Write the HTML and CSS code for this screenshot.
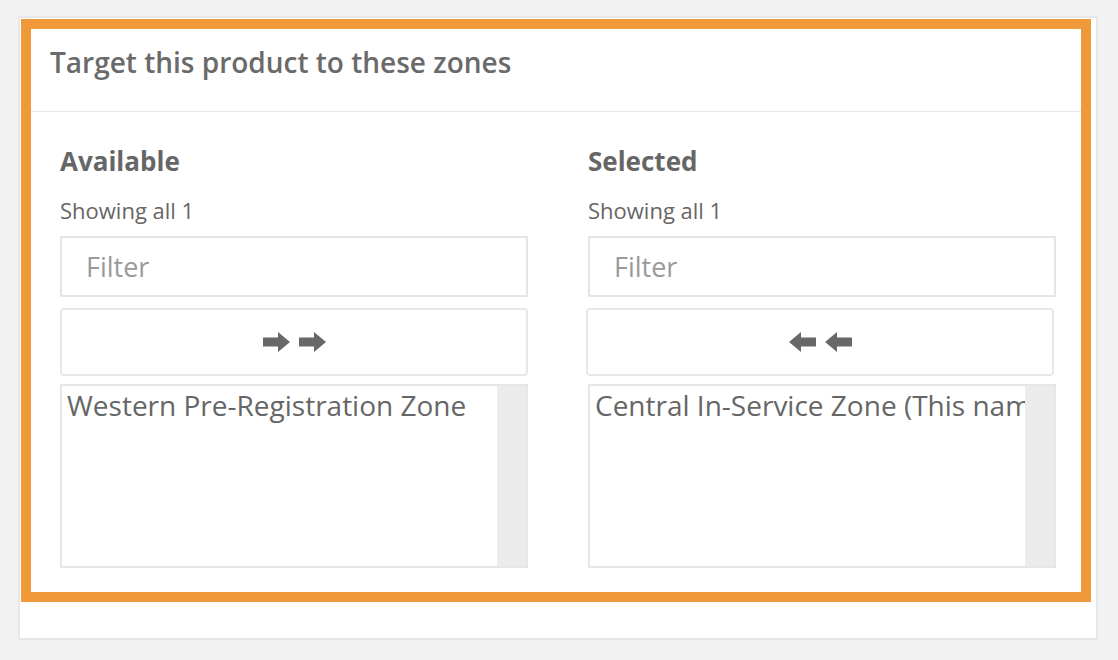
FILE: index.html
```html
<!DOCTYPE html>
<html lang="en">
<head>
<meta charset="utf-8">
<title>Target this product to these zones</title>
<link rel="stylesheet" href="styles.css">
</head>
<body>
<div class="card">
  <section class="panel">
    <header class="panel-head">
      <h2 class="panel-title">Target this product to these zones</h2>
    </header>
    <div class="panel-body">
      <div class="col col-left">
        <h3 class="col-label">Available</h3>
        <div class="info">Showing all 1</div>
        <input class="filter" type="text" placeholder="Filter">
        <button class="move-btn" type="button" aria-label="Move all">
          <svg class="arrow" width="27" height="20" viewBox="0 0 27 20"><path d="M0 5.5H15V0L27 10L15 20V14.5H0Z"/></svg>
          <svg class="arrow" width="27" height="20" viewBox="0 0 27 20"><path d="M0 5.5H15V0L27 10L15 20V14.5H0Z"/></svg>
        </button>
        <div class="listbox">
          <div class="list-items">
            <div class="option">Western Pre-Registration Zone</div>
          </div>
          <div class="track"></div>
        </div>
      </div>
      <div class="col col-right">
        <h3 class="col-label">Selected</h3>
        <div class="info">Showing all 1</div>
        <input class="filter" type="text" placeholder="Filter">
        <button class="move-btn move-btn-right" type="button" aria-label="Remove all">
          <svg class="arrow" width="27" height="20" viewBox="0 0 27 20"><path d="M27 5.5H12V0L0 10L12 20V14.5H27Z"/></svg>
          <svg class="arrow" width="27" height="20" viewBox="0 0 27 20"><path d="M27 5.5H12V0L0 10L12 20V14.5H27Z"/></svg>
        </button>
        <div class="listbox">
          <div class="list-items">
            <div class="option">Central In-Service Zone (This name is very long)</div>
          </div>
          <div class="track"></div>
        </div>
      </div>
    </div>
  </section>
</div>
</body>
</html>
```

FILE: styles.css
```css
* { box-sizing: border-box; }

html, body {
  background: #f2f2f2;
}

body {
  margin: 0;
  padding: 16px 20px 20px 18px;
  font-family: "Open Sans", "Noto Sans", "DejaVu Sans", sans-serif;
  color: #666;
}

.card {
  width: 1080px;
  background: #fff;
  border: 2px solid #e6e7e8;
  padding: 1px 5px 36px 1px;
}

.panel {
  border: 10px solid #f0993a;
  background: #fff;
}

.panel-head {
  padding: 14px 20px 30px 19px;
  border-bottom: 1px solid #e6e8e9;
}

.panel-title {
  margin: 0;
  font-size: 28px;
  line-height: 38px;
  font-weight: 600;
  color: #6a6a6a;
}

.panel-body {
  display: flex;
  gap: 60px;
  padding: 31px 25px 24px 29px;
}

.col {
  width: 468px;
  display: flex;
  flex-direction: column;
}

.col-label {
  margin: 0 0 16px 0;
  font-size: 26px;
  line-height: 36px;
  font-weight: 700;
  color: #666;
}

.info {
  font-size: 22px;
  line-height: 30px;
  color: #666;
  margin-bottom: 11px;
}

.filter {
  display: block;
  width: 100%;
  height: 61px;
  margin: 0 0 11px 0;
  padding: 0 24px;
  border: 2px solid #e5e5e5;
  border-radius: 0;
  background: #fff;
  font-family: "Open Sans", "Noto Sans", sans-serif;
  font-size: 27px;
  color: #666;
  outline: none;
}

.filter::placeholder {
  color: #9a9a9a;
}

.move-btn {
  display: flex;
  align-items: center;
  justify-content: center;
  gap: 9px;
  width: 100%;
  height: 68px;
  margin: 0 0 8px 0;
  padding: 0;
  border: 2px solid #e8e8e8;
  border-radius: 4px;
  background: #fff;
  cursor: pointer;
}

.move-btn-right {
  margin-left: -2px;
}

.arrow {
  display: block;
  fill: #686868;
}

.listbox {
  display: flex;
  height: 184px;
  border: 2px solid #e6e6e6;
  background: #fff;
}

.list-items {
  flex: 1;
  min-width: 0;
  overflow: hidden;
}

.option {
  padding: 0 0 0 5px;
  font-size: 28px;
  line-height: 38px;
  white-space: nowrap;
  overflow: hidden;
  color: #666;
}

.track {
  width: 29px;
  flex: none;
  background: #ebebeb;
}
```
